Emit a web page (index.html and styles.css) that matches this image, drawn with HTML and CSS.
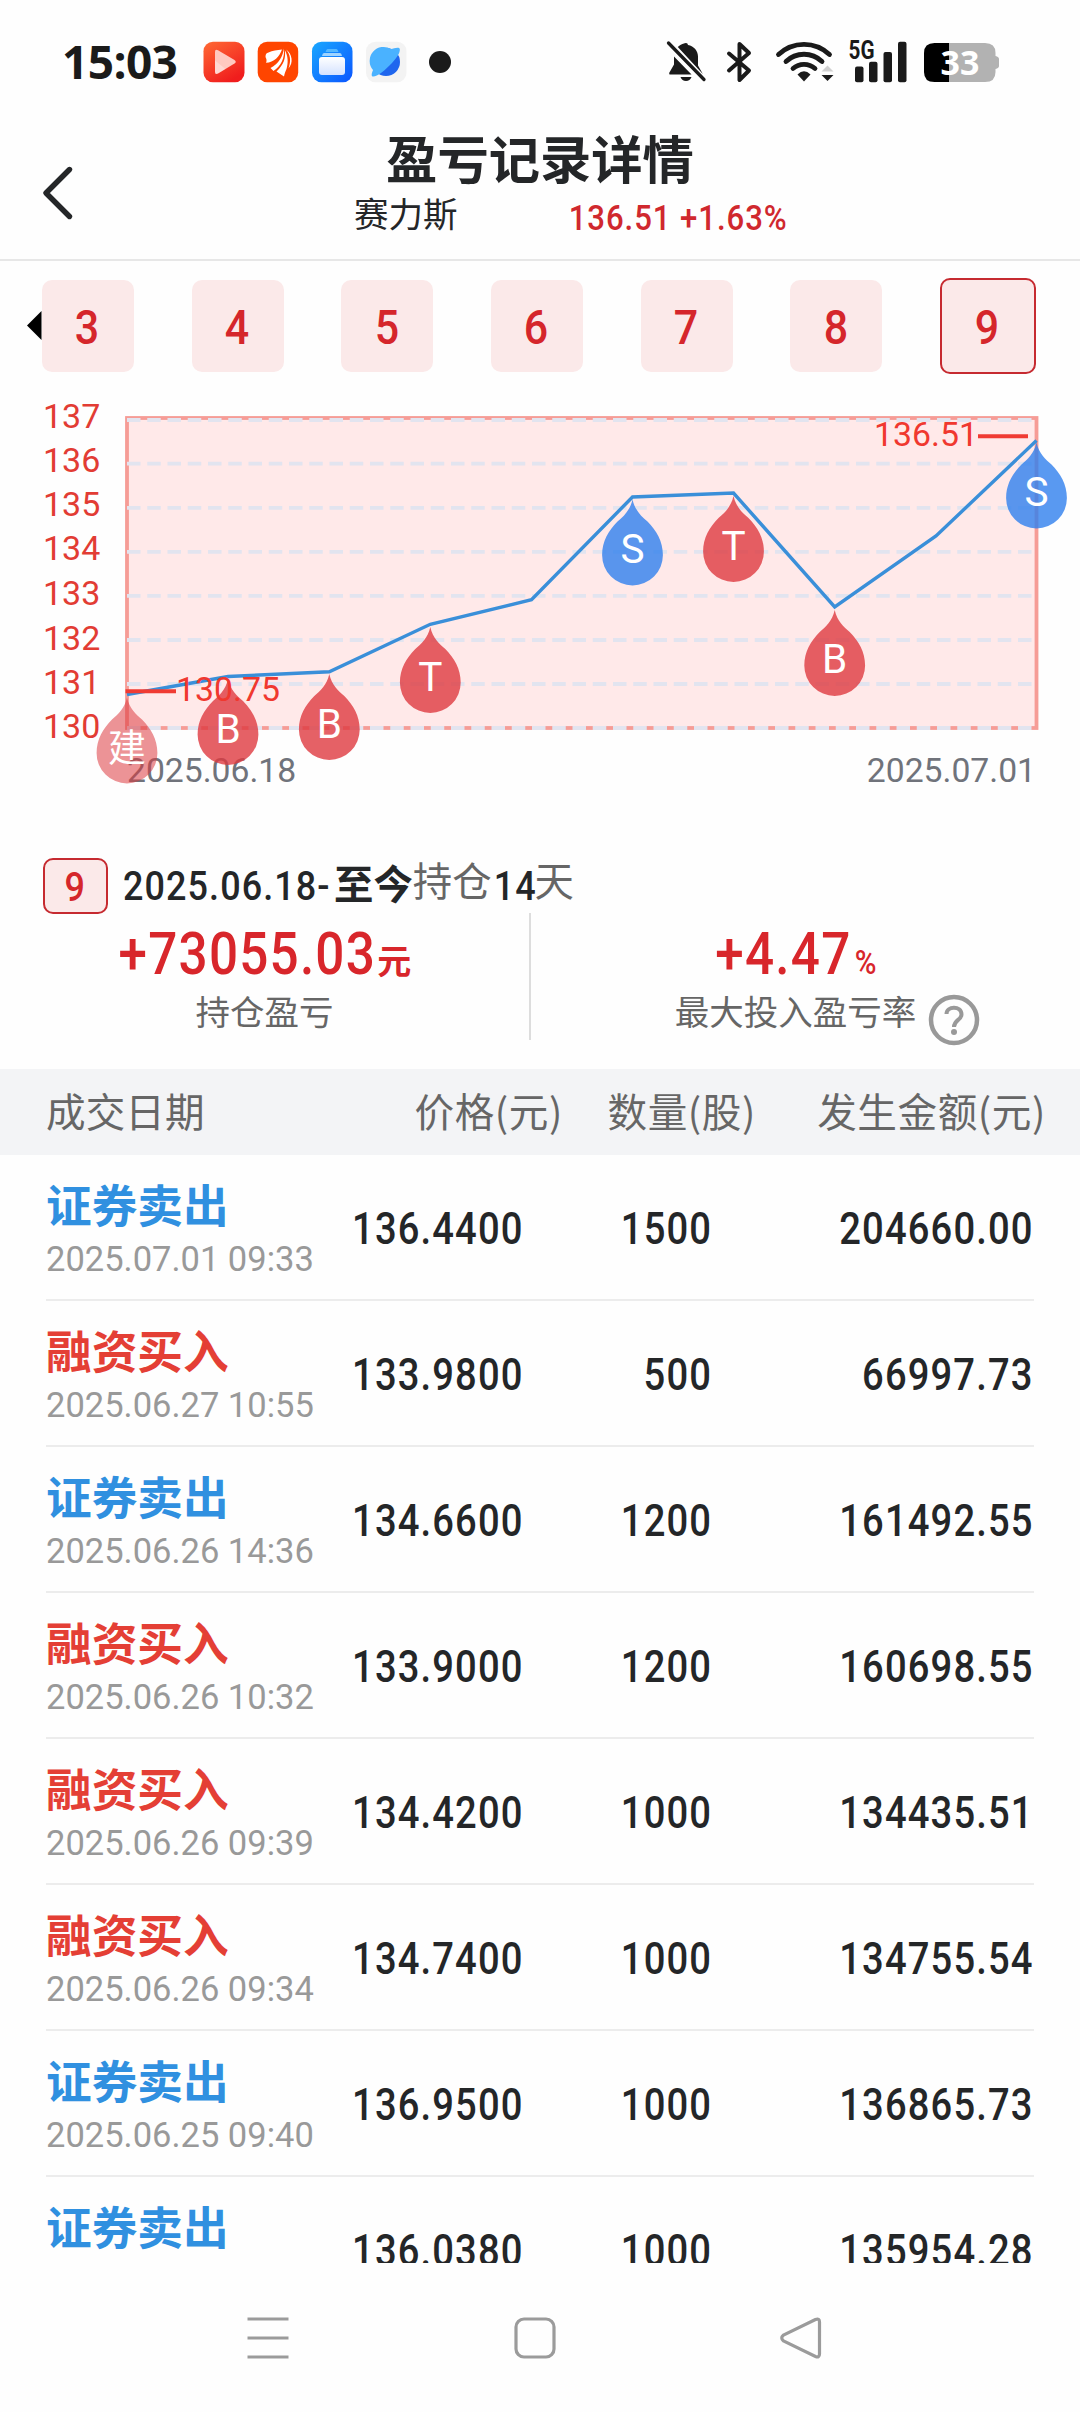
FILE: index.html
```html
<!DOCTYPE html>
<html lang="zh-CN">
<head>
<meta charset="utf-8">
<title>盈亏记录详情</title>
<link rel="stylesheet" href="styles.css">
</head>
<body>
<div class="status">
  <span class="clock">15:03</span>
  <svg class="apps" width="270" height="42" viewBox="202 41 270 42">
    <defs>
      <linearGradient id="g1" x1="0" y1="0" x2=".6" y2="1"><stop offset="0" stop-color="#ff6a35"/><stop offset="1" stop-color="#f01d1d"/></linearGradient>
      <linearGradient id="g2" x1="0" y1="0" x2="1" y2="1"><stop offset="0" stop-color="#1aa8ff"/><stop offset="1" stop-color="#0a55ff"/></linearGradient>
      <linearGradient id="g3" x1="0" y1="0" x2="0" y2="1"><stop offset="0" stop-color="#fff"/><stop offset="1" stop-color="#d4e2ff"/></linearGradient>
    </defs>
    <rect x="203.5" y="41.7" width="41" height="40.5" rx="9.5" fill="url(#g1)"/>
    <path d="M215 52q0-3.500 3-1.800L234.500 60q2.500 1.800 0 3.600L218 73.500q-3 1.500-3-1.800z" fill="#ffc9c0"/>
    <path d="M215 60.500l10.500 8.500-7.500 4.500q-3 1.500-3-1.800z" fill="#fff" opacity=".3"/>
    <rect x="257.700" y="41.700" width="40.500" height="40.500" rx="9.500" fill="#ff4500"/>
    <g fill="#fff">
      <path d="M265.500 57c0-3 1-4 3-4.500 4-2 8.500-2.500 13.500-3-2.500 7-8 13-16 13.300 1-2 .5-4-.5-5.800z"/>
      <path d="M283.800 48.500c-.8 8-5 15-13.300 19.500l3 3c7.500-5 11.500-13 10.300-22.500z"/>
      <path d="M284.800 50c1.200 8-1 14.500-8.300 21.500l7.500 5c.5-3 1.500-5 2.500-7.500 2-7 1.500-13-1.700-19z"/>
      <path d="M286 49.500c4 4.500 5.500 10.500 2.500 19 2.500-3.500 3.500-6 3-10-.5-4-2.500-7-5.500-9z"/>
    </g>
    <rect x="312" y="41.700" width="40.500" height="40.500" rx="9.500" fill="url(#g2)"/>
    <rect x="319" y="57" width="26" height="18" rx="3" fill="url(#g3)"/>
    <path d="M324 53h16q1.500 0 2 3h-20q.500-3 2-3z" fill="#9ed3ff"/>
    <path d="M327.500 49h9q1 0 2 3h-13q1-3 2-3z" fill="#55b8ff"/>
    <rect x="366" y="41.700" width="40.500" height="40.500" rx="9.500" fill="#f3f3f3"/>
    <circle cx="386" cy="62" r="14" fill="#1f66ee"/>
    <path d="M372.500 76.500c-1.800-1.200 0-5 .500-6.500A14 14 0 0 1 391 49c3-1 8.500-2.500 8.800 0 .4 3.500-2.300 8-7.800 14-7 7.500-16 14.500-19.500 13.500z" fill="#4ab2ff"/>
    <circle cx="440" cy="62" r="11" fill="#1a1a1a"/>
  </svg>
  <svg class="sys" width="340" height="60" viewBox="664 32 340 60">
    <g fill="#1a1a1a">
      <path d="M686 43q1.800 0 2 2c6 1 10 6 10 11.500v9l4.800 8.500-25-27c2-2 4-3 6.200-3.500q.2-.5 2-.5z"/>
      <path d="M674 56.500l17.500 18H669.500q-1-1.500.5-3l4-7z"/>
      <path d="M680.500 77h11q-1.500 4-5.500 4t-5.500-4z"/>
    </g>
    <path d="M668.500 43l35.500 36.500" stroke="#1a1a1a" stroke-width="3.300" stroke-linecap="round"/>
    <path d="M729 53.500l20 17-9.500 9.500V44l9.500 9-20 17.500" fill="none" stroke="#1a1a1a" stroke-width="4" stroke-linejoin="round" stroke-linecap="round"/>
    <g fill="none" stroke="#1a1a1a" stroke-width="4.800" stroke-linecap="round">
      <path d="M778.500 54.500a37 37 0 0 1 51 0"/><path d="M786 61.500a26 26 0 0 1 36 0"/><path d="M793 68.500a16.500 16.500 0 0 1 22 0"/>
    </g>
    <path d="M797.500 74.500q6.500-6.500 13 0L804 81.500z" fill="#1a1a1a"/>
    <path d="M821.500 71.500l6-6 6 6z" fill="#d0d0d0"/><path d="M821.500 75h12l-6 6z" fill="#1a1a1a"/>
    <text x="848.500" y="59" class="net" textLength="26" lengthAdjust="spacingAndGlyphs">5G</text>
    <g fill="#1a1a1a"><rect x="855" y="66.500" width="8.500" height="15.700" rx="2"/><rect x="869" y="61.700" width="8.500" height="20.500" rx="2"/><rect x="883.500" y="52" width="8.500" height="30.200" rx="2"/><rect x="898" y="41.700" width="8.500" height="40.500" rx="2"/></g>
    <path d="M949 43h36q10.500 0 10.500 10v3q3.500 1 3.500 3v7q0 2-3.500 3v3q0 10-10.500 10h-36z" fill="#b2b2b2"/>
    <path d="M949 43v39h-14.500Q924 82 924 72V53q0-10 10.500-10z" fill="#000"/>
    <text x="940.500" y="75" class="batt" textLength="39">33</text>
  </svg>
</div>

<header class="top">
  <svg class="back" width="36" height="56" viewBox="40 165 36 56"><path d="M69.500 169.500L46 193l23.500 23.500" fill="none" stroke="#242628" stroke-width="5.400" stroke-linecap="round" stroke-linejoin="round"/></svg>
  <div class="heading">
    <h1>盈亏记录详情</h1>
    <div class="quote"><span>赛力斯</span><span class="num">136.51 +1.63%</span></div>
  </div>
</header>

<nav class="tabs">
  <svg class="more" width="15" height="30" viewBox="0 0 15 30"><path d="M14.500 0v29L0 14.500z"/></svg>
  <div class="tab"><b class="num">3</b></div>
  <div class="tab"><b class="num">4</b></div>
  <div class="tab"><b class="num">5</b></div>
  <div class="tab"><b class="num">6</b></div>
  <div class="tab"><b class="num">7</b></div>
  <div class="tab"><b class="num">8</b></div>
  <div class="tab on"><b class="num">9</b></div>
</nav>

<svg class="chart" width="1080" height="430" viewBox="0 390 1080 430">
  <defs><path id="drop" d="M0 0C2.500 11 9 17 15 22C24 31 30.400 42 30.400 55.500A30.400 30.400 0 0 1-30.400 55.500C-30.400 42-24 31-15 22C-9 17-2.500 11 0 0Z"/></defs>
  <rect x="127" y="418" width="909.500" height="310" fill="#ffe9e9" stroke="#f69c96" stroke-width="3.800"/>
  <path d="M127 420H1034M127 463.700H1034M127 507.800H1034M127 551.900H1034M127 595.900H1034M127 640H1034M127 684H1034M127 728H1034" fill="none" stroke="#e2e4ef" stroke-width="3.800" stroke-dasharray="13.500 6.750"/>
  <g class="axis">
    <text x="43" y="428">137</text><text x="43" y="472">136</text><text x="43" y="516">135</text><text x="43" y="560">134</text>
    <text x="43" y="605">133</text><text x="43" y="649.500">132</text><text x="43" y="693.500">131</text><text x="43" y="737.500">130</text>
  </g>
  <g class="dates"><text x="127" y="782">2025.06.18</text><text x="1036" y="782" text-anchor="end">2025.07.01</text></g>
  <polyline points="127,694.500 228,676.500 329.300,671.800 430.300,624.300 531.500,599.700 632.500,497 733.500,493 834.700,607 936,536 1036.500,440.500" fill="none" stroke="#3a8fd9" stroke-width="3.400"/>
  <path d="M125.500 691.300H176M978 436.300H1028" stroke="#f03b33" stroke-width="4"/>
  <g fill="#df3a40" fill-opacity=".8">
    <use href="#drop" x="228" y="679"/><use href="#drop" x="329.300" y="674"/><use href="#drop" x="430.300" y="627"/>
    <use href="#drop" x="733.500" y="496"/><use href="#drop" x="834.700" y="610"/>
  </g>
  <use href="#drop" x="127" y="697.500" fill="#dd3a40" fill-opacity=".55"/>
  <g fill="#3080ee" fill-opacity=".8"><use href="#drop" x="632.500" y="499.500"/><use href="#drop" x="1036.500" y="442.500"/></g>
  <g class="price"><text x="176" y="701">130.75</text><text x="874" y="446">136.51</text></g>
  <g class="mark">
    <text x="127" y="761" class="cjk">建</text><text x="228" y="742.500">B</text><text x="329.300" y="737.500">B</text><text x="430.300" y="690.500">T</text>
    <text x="632.500" y="563">S</text><text x="733.500" y="559.500">T</text><text x="834.700" y="672.500">B</text><text x="1036.500" y="506">S</text>
  </g>
</svg>

<section class="summary">
  <div class="period"><div class="badge"><b class="num">9</b></div><span class="num from">2025.06.18-</span><b class="now">至今</b><span class="hold">持仓</span><span class="num days">14</span><span class="hold">天</span></div>
  <div class="stats">
    <div class="stat"><div class="value"><span class="num">+73055.03</span><b class="yuan">元</b></div><div class="label">持仓盈亏</div></div>
    <div class="stat right"><div class="value"><span class="num">+4.47</span><span class="num pct">%</span></div>
      <div class="label">最大投入盈亏率<svg class="help" width="52" height="52" viewBox="-26 -26 52 52"><circle r="23" fill="none" stroke="#999" stroke-width="4.500"/><path d="M-7.500-6C-7.500-14.500 7.500-14.500 7.500-5.500C7.500 0 0 0 0 7" fill="none" stroke="#999" stroke-width="4"/><circle cy="12" r="3" fill="#999"/></svg></div></div>
  </div>
</section>

<div class="thead"><span>成交日期</span><span>价格(元)</span><span>数量(股)</span><span>发生金额(元)</span></div>
<main class="rows">
  <div class="row sell"><div class="kind"><b>证券卖出</b><time>2025.07.01 09:33</time></div><span class="num">136.4400</span><span class="num">1500</span><span class="num">204660.00</span></div>
  <div class="row buy"><div class="kind"><b>融资买入</b><time>2025.06.27 10:55</time></div><span class="num">133.9800</span><span class="num">500</span><span class="num">66997.73</span></div>
  <div class="row sell"><div class="kind"><b>证券卖出</b><time>2025.06.26 14:36</time></div><span class="num">134.6600</span><span class="num">1200</span><span class="num">161492.55</span></div>
  <div class="row buy"><div class="kind"><b>融资买入</b><time>2025.06.26 10:32</time></div><span class="num">133.9000</span><span class="num">1200</span><span class="num">160698.55</span></div>
  <div class="row buy"><div class="kind"><b>融资买入</b><time>2025.06.26 09:39</time></div><span class="num">134.4200</span><span class="num">1000</span><span class="num">134435.51</span></div>
  <div class="row buy"><div class="kind"><b>融资买入</b><time>2025.06.26 09:34</time></div><span class="num">134.7400</span><span class="num">1000</span><span class="num">134755.54</span></div>
  <div class="row sell"><div class="kind"><b>证券卖出</b><time>2025.06.25 09:40</time></div><span class="num">136.9500</span><span class="num">1000</span><span class="num">136865.73</span></div>
  <div class="row sell"><div class="kind"><b>证券卖出</b></div><span class="num">136.0380</span><span class="num">1000</span><span class="num">135954.28</span></div>
</main>

<footer class="keys">
  <svg width="44" height="44" viewBox="-22 -22 44 44"><path d="M-20.500-19h41M-20.500 0h41M-20.500 19h41"/></svg>
  <svg width="44" height="44" viewBox="-22 -22 44 44"><rect x="-19" y="-19" width="38" height="38" rx="8"/></svg>
  <svg width="44" height="44" viewBox="-22 -22 44 44"><path d="M14.500-18.500L-17.500-3Q-21 0-17.500 3L14.500 18.500Q18.500 20 18.500 16V-16Q18.500-20 14.500-18.500z"/></svg>
</footer>
</body>
</html>
```
FILE: styles.css
```css
* { box-sizing: border-box; }
body {
  margin: 0;
  width: 1080px;
  height: 2412px;
  overflow: hidden;
  display: flex;
  flex-direction: column;
  background: #fefefe;
  color: #242628;
  font-family: Roboto, "Noto Sans CJK SC", sans-serif;
}
body > * { flex: none; }
svg { display: block; }

/* condensed figures */
.num {
  display: inline-block;
  font-family: Roboto, sans-serif;
  font-weight: 500;
  letter-spacing: .03em;
  white-space: nowrap;
  transform: scaleX(.877);
}

.status { height: 124px; padding: 32px 76px 0 62px; display: flex; align-items: flex-start; }
.clock { width: 140px; margin-top: 6px; font: 700 46px/46px "Open Sans", sans-serif; letter-spacing: -.6px; color: #1a1a1a; }
.apps { margin-top: 9px; }
.sys { margin-left: auto; }
.net { font: 700 25px Roboto, sans-serif; fill: #1a1a1a; }
.batt { font: 700 34px "Open Sans", sans-serif; fill: #fff; }

.top { height: 137px; display: flex; align-items: flex-start; padding-left: 40px; border-bottom: 2px solid #e7e7e7; }
.back { margin-top: 41px; }
.heading { flex: 1; margin-right: 76px; display: flex; flex-direction: column; align-items: center; }
h1 { margin: 10px 0 0; font-size: 51.3px; line-height: 56px; font-weight: 700; }
.quote { width: 434px; margin-left: 62px; display: flex; justify-content: space-between; line-height: 50px; font-size: 34.5px; }
.quote .num { font-size: 35.5px; line-height: 56px; color: #d0282e; transform-origin: right; }

.tabs { height: 113px; padding: 17px 44px 0 27px; display: flex; align-items: center; }
.tab {
  width: 92px; height: 92px; margin-right: 57.7px; border-radius: 10px;
  background: #fbe9e9; display: flex; align-items: center; justify-content: center;
}
.tab .num { font-size: 49px; line-height: 56px; padding-top: 3px; color: #d5262b; }
.tab.on { width: 96px; height: 96px; margin: 0; border: 2px solid #c62a30; }

.chart { margin-top: 16px; }
.axis, .price { font: 400 34px Roboto, sans-serif; fill: #e23c34; }
.price { font-size: 33.8px; fill: #f0382f; }
.dates { font: 400 33.7px Roboto, sans-serif; fill: #70737b; }
.mark { font: 400 40.5px Roboto, sans-serif; fill: #fff; text-anchor: middle; }
.mark .cjk { font: 400 38px "Noto Sans CJK SC", sans-serif; }

.summary { height: 249px; padding-top: 38px; }
.period { display: flex; height: 55px; padding-left: 43px; font-size: 39.4px; line-height: 55px; }
.period > .num { font-size: 41px; line-height: 57px; transform-origin: left; }
.badge { width: 65px; height: 56px; border: 2px solid #c62a30; border-radius: 10px; background: #fbe9e9; display: flex; align-items: center; justify-content: center; margin-right: 15px; }
.badge .num { font-size: 41px; line-height: 48px; color: #d5262b; padding-top: 2px; }
.from { width: 211px; }
.now { line-height: 56px; }
.hold { color: #666; line-height: 50px; }
.days { width: 43px; padding-left: 2px; }
.stats { display: flex; height: 127px; }
.stat { width: 531px; border-right: 2px solid #ddd; display: flex; flex-direction: column; align-items: center; }
.stat.right { width: 549px; border: 0; }
.value { height: 74px; display: flex; align-items: baseline; color: #d8262b; line-height: 82px; }
.value .num { font-size: 59px; letter-spacing: .024em; transform: scaleX(.868); margin: 0 -19px; }
.right .value { padding-right: 18px; }
.right .num { margin: 0 -9px; }
.yuan { font-size: 34px; margin-left: 1px; line-height: 1; }
.value .pct { font-size: 34px; margin: 0; line-height: 1; }
.label { display: flex; height: 52px; font-size: 34.5px; line-height: 52px; color: #666; }
.help { margin: 7px 0 0 12px; }
.right .label { padding-left: 44px; }

.thead {
  height: 86px; padding-left: 46px; background: #f3f4f6; color: #666;
  display: grid; grid-template-columns: 320px 197px 193px 290px;
  font: 400 39.6px/82px "Noto Sans CJK SC", sans-serif; letter-spacing: .6px; text-align: right;
}
.thead span:first-child { text-align: left; letter-spacing: .1px; }

.rows { height: 1108px; overflow: hidden; padding: 0 46px; }
.row { height: 146px; border-bottom: 2px solid #ececec; display: grid; grid-template-columns: 300px 178px 188px 322px; }
.row .num { font-size: 43.5px; line-height: 149px; height: 144px; justify-self: end; transform-origin: right; }
.kind { display: flex; flex-direction: column; }
.kind b { font-size: 45.7px; line-height: 54px; margin-top: 26px; }
.kind time { font-size: 34.5px; line-height: 40px; margin-top: 4px; color: #999; }
.sell b { color: #3090e0; }
.buy b { color: #e43f35; }

.keys { height: 149px; padding: 53px 257px 0 246px; display: flex; justify-content: space-between; }
.keys svg { fill: none; stroke: #9b9b9b; stroke-width: 3.2; }
```
